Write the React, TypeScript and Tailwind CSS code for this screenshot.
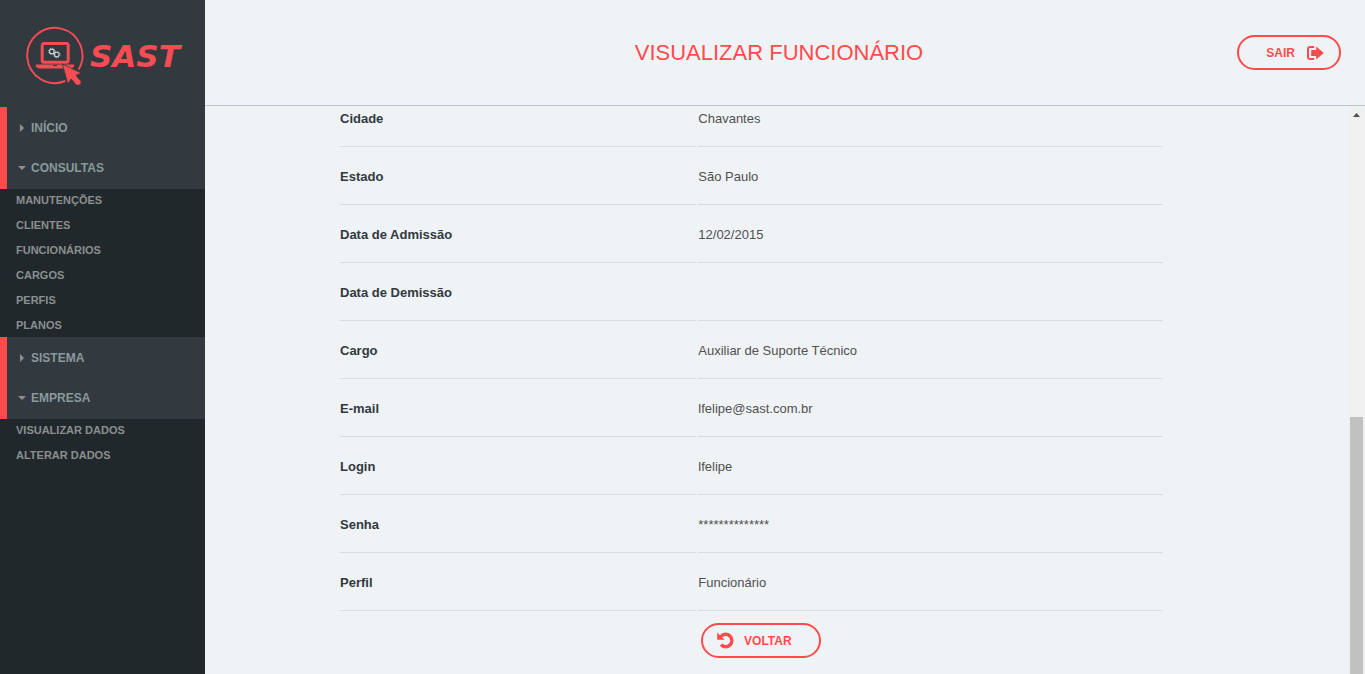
import React from "react";

const rows: [string, string][] = [
  ["Cidade", "Chavantes"],
  ["Estado", "São Paulo"],
  ["Data de Admissão", "12/02/2015"],
  ["Data de Demissão", ""],
  ["Cargo", "Auxiliar de Suporte Técnico"],
  ["E-mail", "lfelipe@sast.com.br"],
  ["Login", "lfelipe"],
  ["Senha", "**************"],
  ["Perfil", "Funcionário"],
];

function LogoMark() {
  return (
    <svg viewBox="0 0 60 60" className="h-[60px] w-[60px] shrink-0" fill="none" aria-hidden="true">
      <path d="M40.3 55 A27.6 27.6 0 1 1 53.6 43.5" stroke="#f64c53" strokeWidth="1.9" />
      <rect x="17.2" y="17.6" width="26" height="18.6" rx="2" stroke="#f64c53" strokeWidth="3" />
      <path d="M10.8 38.4 H49 V40.6 Q48 42.4 45.5 42.4 H14.5 Q11.5 42.4 10.8 40.6 Z" fill="#f64c53" />
      <path d="M28 39.6 h4" stroke="#32393f" strokeWidth="1" />
      <path
        d="M37.4 38 L56.4 47 L51 49.4 L56.2 55.4 Q56.4 57.6 54.4 59 Q52.4 59.8 51 58.8 L46.2 53 L42.8 58 Z"
        fill="#f64c53"
        stroke="#32393f"
        strokeWidth="0.8"
      />
      <circle cx="26.8" cy="25.4" r="2.3" stroke="#cfd3d6" strokeWidth="1.1" />
      <circle cx="26.8" cy="25.4" r="3.2" stroke="#cfd3d6" strokeWidth="0.8" strokeDasharray="1.2 1.3" />
      <circle cx="31.8" cy="28.6" r="2.3" stroke="#cfd3d6" strokeWidth="1.1" />
      <circle cx="31.8" cy="28.6" r="3.2" stroke="#cfd3d6" strokeWidth="0.8" strokeDasharray="1.2 1.3" />
    </svg>
  );
}

function LogOutIcon() {
  return (
    <svg viewBox="0 0 17 14" className="h-3.5 w-[17px]" fill="none" aria-hidden="true">
      <path d="M7.2 1H3Q1 1 1 3V11Q1 13 3 13H7.2" stroke="currentColor" strokeWidth="2" />
      <path d="M4.2 4H9.2V0.6L16.8 7L9.2 13.4V10H4.2Z" fill="currentColor" />
    </svg>
  );
}

function UndoIcon() {
  return (
    <svg viewBox="0 0 17 17" className="h-[17px] w-[17px]" fill="none" aria-hidden="true">
      <path d="M4 4.4A6.2 6.2 0 1 1 4 12.6" stroke="currentColor" strokeWidth="3.4" />
      <path d="M0.2 0.6L7.6 7.8H0.2Z" fill="currentColor" />
    </svg>
  );
}

function MenuItem({ label, open = false }: { label: string; open?: boolean }) {
  return (
    <button
      type="button"
      aria-expanded={open}
      className="flex h-10 w-full cursor-pointer items-center gap-1 pl-2.5 text-left text-xs font-bold text-[#8a9a9c]"
    >
      <span className="flex w-[10px] justify-center">
        {open ? (
          <svg viewBox="0 0 8 4" className="h-1 w-2" aria-hidden="true">
            <path d="M0 0H8L4 4Z" fill="#918d90" />
          </svg>
        ) : (
          <svg viewBox="0 0 4 8" className="h-2 w-1" aria-hidden="true">
            <path d="M0 0L4 4L0 8Z" fill="#918d90" />
          </svg>
        )}
      </span>
      {label}
    </button>
  );
}

function SubMenu({ items }: { items: string[] }) {
  return (
    <ul className="flex flex-col gap-0.5 pl-4">
      {items.map((item) => (
        <li key={item} className="h-[23px]">
          <a href="#" className="block text-[11px] leading-[23px] font-bold text-[#8b8f90]">
            {item}
          </a>
        </li>
      ))}
    </ul>
  );
}

export default function App() {
  return (
    <div className="flex h-screen overflow-hidden bg-[#eff3f6] font-['Liberation_Sans',Arial,sans-serif]">
      <aside className="w-[205px] shrink-0 bg-[#21282b]">
        <div className="flex h-[107px] items-center gap-[5px] bg-[#32393f] pt-1 pl-[25px]">
          <LogoMark />
          <span className="pt-0.5 font-['DejaVu_Sans',sans-serif] text-[31px] font-bold text-[#f64c53] italic">
            SAST
          </span>
        </div>
        <nav aria-label="Menu principal">
          <div className="border-l-[7px] border-[#ff4b4b] bg-[#32393f] py-px">
            <MenuItem label="INÍCIO" />
            <MenuItem label="CONSULTAS" open />
          </div>
          <SubMenu items={["MANUTENÇÕES", "CLIENTES", "FUNCIONÁRIOS", "CARGOS", "PERFIS", "PLANOS"]} />
          <div className="border-l-[7px] border-[#ff4b4b] bg-[#32393f] py-px">
            <MenuItem label="SISTEMA" />
            <MenuItem label="EMPRESA" open />
          </div>
          <SubMenu items={["VISUALIZAR DADOS", "ALTERAR DADOS"]} />
        </nav>
      </aside>

      <div className="flex min-w-0 flex-1 flex-col">
        <header className="grid h-[106px] shrink-0 grid-cols-[1fr_auto_1fr] items-center border-b border-[#bcc6d0] pr-6">
          <h1 className="col-start-2 pl-3 text-[22px] text-[#ff4b4b]">VISUALIZAR FUNCIONÁRIO</h1>
          <button
            type="button"
            className="flex h-[35px] w-[104px] cursor-pointer items-center justify-end gap-3 justify-self-end rounded-full border-2 border-[#ff4b4b] pr-[15px] text-xs font-bold text-[#ff4b4b]"
          >
            SAIR
            <LogOutIcon />
          </button>
        </header>

        <div className="flex min-h-0 flex-1">
          <main className="flex min-w-0 flex-1 flex-col justify-end overflow-hidden pr-[183px] pb-4 pl-[133px]">
            <table className="w-full table-fixed border-separate border-spacing-0.5 text-[13px]">
              <colgroup>
                <col className="w-[43.4%]" />
                <col />
              </colgroup>
              <tbody>
                {rows.map(([label, value]) => (
                  <tr key={label} className="h-14">
                    <th scope="row" className="border-b border-[#dadcde] p-0 text-left font-bold text-[#32393f]">
                      {label}
                    </th>
                    <td className="border-b border-[#dadcde] p-0 text-[#505050]">{value}</td>
                  </tr>
                ))}
              </tbody>
            </table>
            <div className="grid grid-cols-[43.9%_1fr] pt-2.5">
              <button
                type="button"
                className="col-start-2 flex h-[35px] w-[120px] cursor-pointer items-center gap-2.5 rounded-full border-2 border-[#ff4b4b] pl-3.5 text-xs font-bold text-[#ff4b4b]"
              >
                <UndoIcon />
                VOLTAR
              </button>
            </div>
          </main>
          <div className="flex w-[17px] shrink-0 flex-col bg-[#f0f0f0]" aria-hidden="true">
            <div className="flex h-[17px] items-center justify-center">
              <svg viewBox="0 0 7 4" className="h-1 w-[7px]">
                <path d="M0 4L3.5 0L7 4Z" fill="#505050" />
              </svg>
            </div>
            <div className="flex flex-1 flex-col px-0.5">
              <div className="basis-[53.4%]" />
              <div className="flex-1 bg-[#c1c1c1]" />
            </div>
          </div>
        </div>
      </div>
    </div>
  );
}
